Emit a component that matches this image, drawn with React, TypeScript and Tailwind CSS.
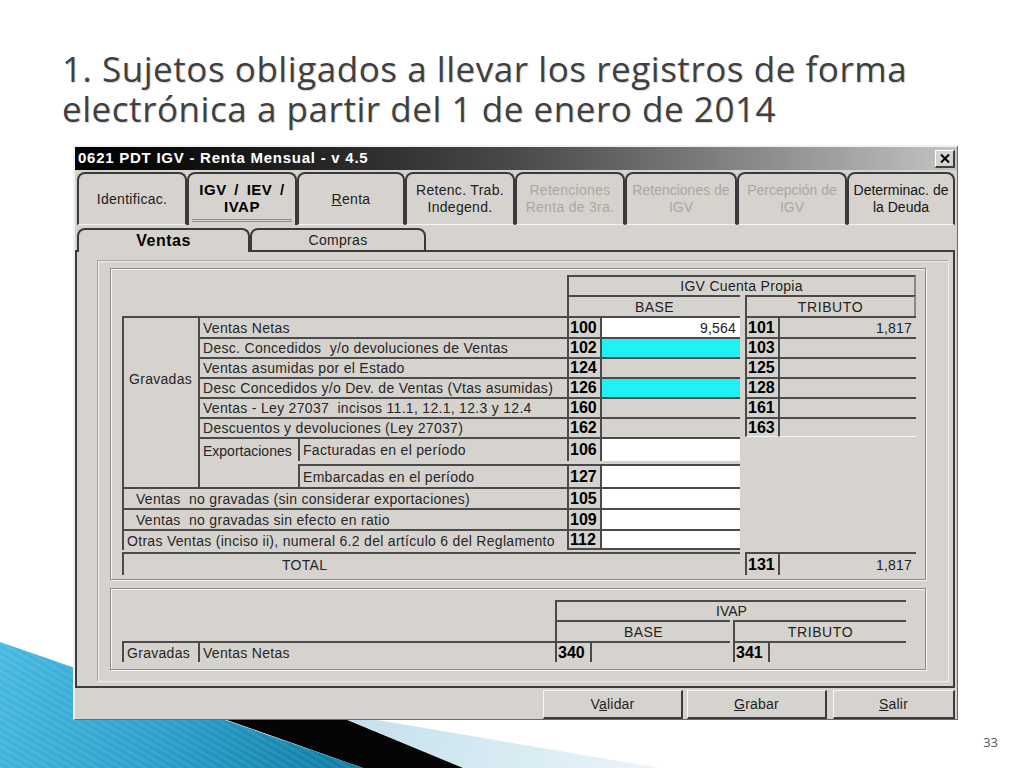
import React from "react";

type P = { className?: string; children?: React.ReactNode };

function Cell({ className = "", children }: P) {
  return (
    <div
      className={`border-t-2 border-l-2 border-[#4a4a4a] flex items-center overflow-hidden whitespace-pre leading-none ${className}`}
    >
      {children}
    </div>
  );
}

function Lbl({ className = "", children }: P) {
  return <Cell className={`text-[14px] tracking-[0.3px] text-[#262626] pl-[3px] ${className}`}>{children}</Cell>;
}

function Code({ className = "", children }: P) {
  return <Cell className={`text-[16px] font-bold text-black pl-[1px] ${className}`}>{children}</Cell>;
}

function Val({ className = "", children }: P) {
  return (
    <Cell className={`text-[14px] tracking-[0.2px] text-[#222] justify-end pr-[4px] ${className}`}>{children}</Cell>
  );
}

function Tab({ w, children, className = "" }: { w: string; children: React.ReactNode; className?: string }) {
  return (
    <div
      className={`${w} h-full border-2 border-[#3a3a3a] border-b border-b-[#f4f4f2] rounded-t-[8px] flex flex-col items-center justify-center text-center text-[14px] tracking-[0.3px] leading-[17px] ${className}`}
    >
      {children}
    </div>
  );
}

function Btn({ w, className = "", children }: { w: string; className?: string; children: React.ReactNode }) {
  return (
    <div
      className={`${w} h-[29px] bg-[#d6d3ce] border-t border-l border-[#f6f6f4] border-r-2 border-b-2 border-r-[#3c3c3c] border-b-[#3c3c3c] flex items-center justify-center text-[14px] tracking-[0.2px] text-[#1e1e1e] ${className}`}
    >
      {children}
    </div>
  );
}

export default function App() {
  return (
    <div className="relative w-[1024px] h-[768px] overflow-hidden bg-white">
      {/* slide decoration */}
      <svg className="absolute inset-0" width="1024" height="768" viewBox="0 0 1024 768">
        <defs>
          <linearGradient id="blueG" x1="0" y1="640" x2="330" y2="768" gradientUnits="userSpaceOnUse">
            <stop offset="0" stopColor="#47b9e0" />
            <stop offset="0.5" stopColor="#2aa1cc" />
            <stop offset="1" stopColor="#0f7fa8" />
          </linearGradient>
          <linearGradient id="lightG" x1="340" y1="720" x2="640" y2="768" gradientUnits="userSpaceOnUse">
            <stop offset="0" stopColor="#c3e0ec" />
            <stop offset="1" stopColor="#e8f4f8" />
          </linearGradient>
          <pattern id="stripes" width="6" height="6" patternUnits="userSpaceOnUse" patternTransform="rotate(-60)">
            <rect width="3" height="6" fill="#ffffff" opacity="0.08" />
          </pattern>
        </defs>
        <polygon points="330,712 660,768 463,768" fill="url(#lightG)" />
        <polygon points="150,638 463,768 363,768 150,693" fill="#050505" />
        <polygon points="0,642 363,768 0,768" fill="url(#blueG)" />
        <polygon points="0,642 363,768 0,768" fill="url(#stripes)" />
      </svg>

      <div className="relative z-10 flex flex-col">
        {/* title */}
        <div
          className="h-[145px] pl-[62px] pt-[49px] text-[35px] leading-[40px] text-[#3f3f3f] tracking-[0.55px] [text-shadow:1px_1px_1px_rgba(0,0,0,0.18)]"
          style={{ fontFamily: '"Open Sans", "Noto Sans", sans-serif' }}
        >
          <div>1. Sujetos obligados a llevar los registros de forma</div>
          <div>electrónica a partir del 1 de enero de 2014</div>
        </div>

        {/* window */}
        <div
          className="ml-[73px] w-[885px] h-[575px] flex flex-col bg-[#d6d3ce] border-l-2 border-t-2 border-[#f2f2f0] border-r border-b border-r-[#6a6a6a] border-b-[#6a6a6a]"
          style={{ fontFamily: '"Liberation Sans", Arial, sans-serif' }}
        >
          {/* title bar */}
          <div className="h-[23px] flex items-center justify-between pl-[3px] pr-[2px] bg-linear-to-r from-[#020202] via-[#4a4a4a] to-[#c4c4c4]">
            <span className="text-white font-bold text-[15px] tracking-[0.75px]">0621 PDT IGV - Renta Mensual - v 4.5</span>
            <div className="w-[20px] h-[18px] bg-[#d6d3ce] border-t border-l border-white border-r-2 border-b-2 border-r-[#404040] border-b-[#404040] flex items-center justify-center">
              <svg width="10" height="9" viewBox="0 0 10 9">
                <path d="M1 0.5 L9 8.5 M9 0.5 L1 8.5" stroke="#000" strokeWidth="2" />
              </svg>
            </div>
          </div>

          {/* main tabs */}
          <div className="mt-[2px] h-[53px] flex pl-[2px]">
            <Tab w="w-[110px]" className="text-[#202020]">Identificac.</Tab>
            <Tab w="w-[110px]" className="border-b-0 font-bold text-[15px] tracking-[0.5px] [word-spacing:3px] text-black leading-[16px] pt-[3px]">
              <span>IGV / IEV /</span>
              <span>IVAP</span>
              <div className="mt-[4px] w-[100px] h-[3px] border-y border-[#8c8c8c]" />
            </Tab>
            <Tab w="w-[108px]" className="text-[#202020]">
              <span>
                <span className="underline">R</span>enta
              </span>
            </Tab>
            <Tab w="w-[110px]" className="text-[#202020]">
              <span>Retenc. Trab.</span>
              <span>Indegend.</span>
            </Tab>
            <Tab w="w-[110px]" className="text-[#a9a7a2]">
              <span>Retenciones</span>
              <span>Renta de 3ra.</span>
            </Tab>
            <Tab w="w-[112px]" className="text-[#a9a7a2] tracking-[0px]">
              <span>Retenciones de</span>
              <span>IGV</span>
            </Tab>
            <Tab w="w-[110px]" className="text-[#a9a7a2] tracking-[0px]">
              <span>Percepción de</span>
              <span>IGV</span>
            </Tab>
            <Tab w="w-[108px]" className="text-[#141414] tracking-[0px]">
              <span>Determinac. de</span>
              <span>la Deuda</span>
            </Tab>
          </div>

          {/* sub tabs */}
          <div className="mt-[3px] h-[24px] flex w-[880px]">
            <div className="w-[2px] border-b-2 border-[#3c3c3c]" />
            <div className="w-[173px] border-2 border-b-0 border-[#3a3a3a] rounded-t-[8px] flex items-center justify-center text-[16px] tracking-[0.5px] font-bold text-black">
              Ventas
            </div>
            <div className="w-[176px] border-2 border-[#3a3a3a] rounded-t-[8px] flex items-center justify-center text-[14px] tracking-[0.3px] text-[#222]">
              Compras
            </div>
            <div className="flex-1 border-b-2 border-[#3c3c3c]" />
          </div>

          {/* panel */}
          <div className="w-[880px] h-[436px] border-l-2 border-r-2 border-b-2 border-[#3c3c3c] pl-[21px] pt-[9px]">
            <div className="w-[851px] h-[421px] border border-[#f1f0ec] shadow-[-1px_-1px_0_#a6a39d] pl-[11px] pt-[6px] flex flex-col">
              {/* group 1 */}
              <div className="w-[816px] h-[312px] border border-[#8e8b86] shadow-[1px_1px_0_#f6f5f2,inset_1px_1px_0_#f6f5f2] pl-[11px] pt-[6px]">
                <div className="grid grid-cols-[76px_100px_269px_33px_140px_5px_33px_138px] grid-rows-[20px_21px_21px_20px_20px_20px_20px_20px_24px_26px_21px_21px_21px_2px_23px]">
                  {/* headers */}
                  <Cell className="col-start-4 col-span-5 row-start-1 justify-center text-[14px] tracking-[0.3px] text-[#222] border-r-2 border-r-[#8a8a8a]">
                    IGV Cuenta Propia
                  </Cell>
                  <Cell className="col-start-4 col-span-2 row-start-2 justify-center text-[14px] text-[#222] tracking-[0.4px]">
                    BASE
                  </Cell>
                  <Cell className="col-start-7 col-span-2 row-start-2 justify-center text-[14px] text-[#222] tracking-[0.6px] border-r-2 border-r-[#8a8a8a]">
                    TRIBUTO
                  </Cell>

                  {/* Gravadas */}
                  <Lbl className="col-start-1 row-start-3 row-span-8 items-start pt-[54px] pl-[5px]">Gravadas</Lbl>

                  <Lbl className="col-start-2 col-span-2 row-start-3">Ventas Netas</Lbl>
                  <Code className="col-start-4 row-start-3">100</Code>
                  <Val className="col-start-5 row-start-3 bg-white">9,564</Val>
                  <Code className="col-start-7 row-start-3">101</Code>
                  <Val className="col-start-8 row-start-3">1,817</Val>

                  <Lbl className="col-start-2 col-span-2 row-start-4">Desc. Concedidos  y/o devoluciones de Ventas</Lbl>
                  <Code className="col-start-4 row-start-4">102</Code>
                  <Val className="col-start-5 row-start-4 bg-[#1ff2f4]" />
                  <Code className="col-start-7 row-start-4">103</Code>
                  <Val className="col-start-8 row-start-4" />

                  <Lbl className="col-start-2 col-span-2 row-start-5">Ventas asumidas por el Estado</Lbl>
                  <Code className="col-start-4 row-start-5">124</Code>
                  <Val className="col-start-5 row-start-5" />
                  <Code className="col-start-7 row-start-5">125</Code>
                  <Val className="col-start-8 row-start-5" />

                  <Lbl className="col-start-2 col-span-2 row-start-6">Desc Concedidos y/o Dev. de Ventas (Vtas asumidas)</Lbl>
                  <Code className="col-start-4 row-start-6">126</Code>
                  <Val className="col-start-5 row-start-6 bg-[#1ff2f4]" />
                  <Code className="col-start-7 row-start-6">128</Code>
                  <Val className="col-start-8 row-start-6" />

                  <Lbl className="col-start-2 col-span-2 row-start-7">Ventas - Ley 27037  incisos 11.1, 12.1, 12.3 y 12.4</Lbl>
                  <Code className="col-start-4 row-start-7">160</Code>
                  <Val className="col-start-5 row-start-7" />
                  <Code className="col-start-7 row-start-7">161</Code>
                  <Val className="col-start-8 row-start-7" />

                  <Lbl className="col-start-2 col-span-2 row-start-8">Descuentos y devoluciones (Ley 27037)</Lbl>
                  <Code className="col-start-4 row-start-8">162</Code>
                  <Val className="col-start-5 row-start-8" />
                  <Code className="col-start-7 row-start-8 border-b border-b-[#f4f4f2]">163</Code>
                  <Val className="col-start-8 row-start-8 border-b border-b-[#f4f4f2]" />

                  <Lbl className="col-start-2 row-start-9 row-span-2 items-start pt-[5px] tracking-[0px]">Exportaciones</Lbl>
                  <Lbl className="col-start-3 row-start-9">Facturadas en el período</Lbl>
                  <Code className="col-start-4 row-start-9">106</Code>
                  <Val className="col-start-5 row-start-9 bg-white" />

                  <Lbl className="col-start-3 row-start-10 mt-[3px]">Embarcadas en el período</Lbl>
                  <Code className="col-start-4 row-start-10 mt-[3px]">127</Code>
                  <Val className="col-start-5 row-start-10 mt-[3px] bg-white" />

                  <Lbl className="col-start-1 col-span-3 row-start-11 pl-[12px]">Ventas  no gravadas (sin considerar exportaciones)</Lbl>
                  <Code className="col-start-4 row-start-11">105</Code>
                  <Val className="col-start-5 row-start-11 bg-white" />

                  <Lbl className="col-start-1 col-span-3 row-start-12 pl-[12px]">Ventas  no gravadas sin efecto en ratio</Lbl>
                  <Code className="col-start-4 row-start-12">109</Code>
                  <Val className="col-start-5 row-start-12 bg-white" />

                  <Lbl className="col-start-1 col-span-3 row-start-13 pl-[1px]">Otras Ventas (inciso ii), numeral 6.2 del artículo 6 del Reglamento</Lbl>
                  <Code className="col-start-4 row-start-13 border-b-2 border-b-[#4a4a4a]">112</Code>
                  <Val className="col-start-5 row-start-13 bg-white border-b-2 border-b-[#4a4a4a]" />

                  <Lbl className="col-start-1 col-span-5 row-start-15 pl-[158px] text-[#1e1e1e]">TOTAL</Lbl>
                  <Code className="col-start-7 row-start-15">131</Code>
                  <Val className="col-start-8 row-start-15">1,817</Val>
                </div>
              </div>

              {/* group 2 */}
              <div className="mt-[8px] w-[816px] h-[82px] border border-[#8e8b86] shadow-[1px_1px_0_#f6f5f2,inset_1px_1px_0_#f6f5f2] pl-[11px] pt-[11px]">
                <div className="grid grid-cols-[76px_357px_35px_140px_3px_35px_138px] grid-rows-[20px_21px_21px]">
                  <Cell className="col-start-3 col-span-5 row-start-1 justify-center text-[14px] text-[#222]">IVAP</Cell>
                  <Cell className="col-start-3 col-span-2 row-start-2 justify-center text-[14px] text-[#222] tracking-[0.4px]">BASE</Cell>
                  <Cell className="col-start-6 col-span-2 row-start-2 justify-center text-[14px] text-[#222] tracking-[0.6px]">TRIBUTO</Cell>
                  <Lbl className="col-start-1 row-start-3">Gravadas</Lbl>
                  <Lbl className="col-start-2 row-start-3">Ventas Netas</Lbl>
                  <Code className="col-start-3 row-start-3">340</Code>
                  <Val className="col-start-4 row-start-3" />
                  <Code className="col-start-6 row-start-3">341</Code>
                  <Val className="col-start-7 row-start-3" />
                </div>
              </div>
            </div>
          </div>

          {/* buttons */}
          <div className="flex items-start pt-[2px] pl-[468px]">
            <Btn w="w-[140px]">
              <span>
                V<span className="underline">a</span>lidar
              </span>
            </Btn>
            <Btn w="w-[140px]" className="ml-[4px]">
              <span>
                <span className="underline">G</span>rabar
              </span>
            </Btn>
            <Btn w="w-[122px]" className="ml-[6px]">
              <span>
                <span className="underline">S</span>alir
              </span>
            </Btn>
          </div>
        </div>

        {/* slide number */}
        <div
          className="flex justify-end pr-[26px] pt-[13px] text-[13px] text-[#555]"
          style={{ fontFamily: '"Open Sans", sans-serif' }}
        >
          33
        </div>
      </div>
    </div>
  );
}
